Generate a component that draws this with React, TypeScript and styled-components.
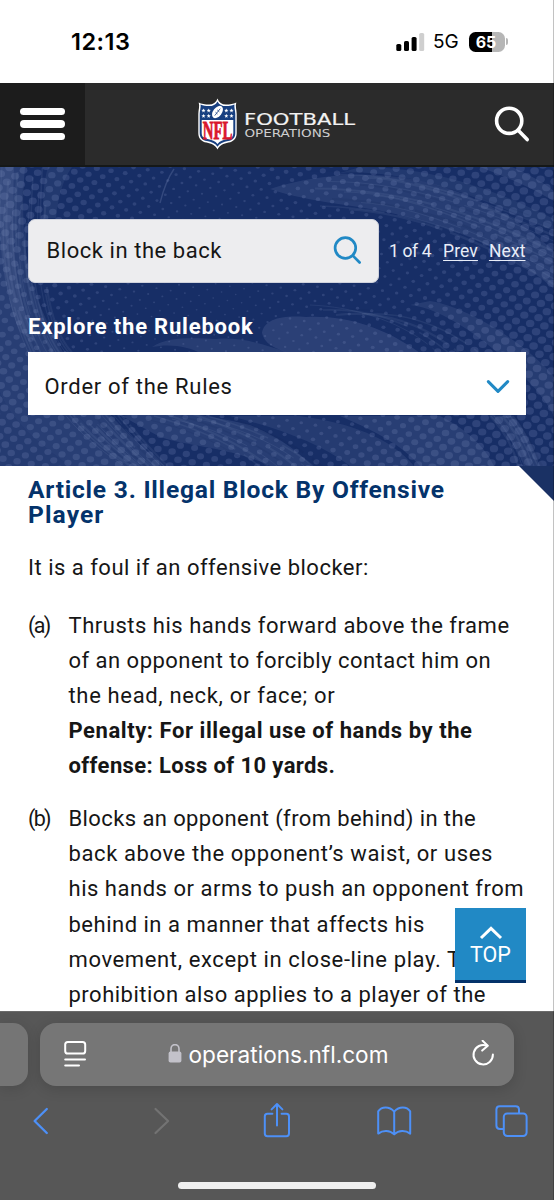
import React from 'react';
import styled, { createGlobalStyle } from 'styled-components';

const GlobalStyle = createGlobalStyle`
  *, *::before, *::after { box-sizing: border-box; }
  body { margin: 0; background: #fff; font-family: Roboto, "Liberation Sans", sans-serif; color: #161616; }
`;

const Screen = styled.div`
  position: relative;
  width: 554px;
  height: 1200px;
  display: flex;
  flex-direction: column;
  overflow: hidden;
  background: #fff;
  &::after {
    content: '';
    position: absolute;
    top: 0;
    right: 0;
    width: 1px;
    height: 100%;
    background: rgba(0, 0, 0, 0.24);
  }
`;

/* ---------- status bar ---------- */

const StatusBar = styled.div`
  flex: none;
  height: 83px;
  padding: 0 46px 0 71px;
  display: flex;
  align-items: center;
  font-family: Inter, "Liberation Sans", sans-serif;
  color: #000;
`;

const Clock = styled.div`
  margin-right: auto;
  font-size: 23.5px;
  font-weight: 600;
  letter-spacing: 0.5px;
`;

const Network = styled.div`
  margin: 0 9px 0 8px;
  font-size: 19px;
  font-weight: 400;
  width: 27px;
`;

const Battery = styled.div`
  width: 36px;
  height: 20px;
  border-radius: 6.5px;
  background: linear-gradient(90deg, #000 23px, #b6b6b6 23px);
  color: #fff;
  font-size: 16px;
  line-height: 20px;
  font-weight: 700;
  text-align: center;
  padding-right: 2px;
`;

const BatteryTip = styled.div`
  width: 2px;
  height: 7px;
  margin-left: 1px;
  border-radius: 0 2px 2px 0;
  background: #b6b6b6;
`;

/* ---------- site header ---------- */

const Header = styled.header`
  flex: none;
  height: 84px;
  display: flex;
  align-items: stretch;
  justify-content: space-between;
  background: #2b2b2b;
  border-bottom: 2px solid #151818;
`;

const MenuButton = styled.div`
  width: 84.5px;
  padding: 24.5px 0 0 20px;
  background: #1c1c1c;
  display: flex;
  flex-direction: column;
  gap: 5px;
`;

const MenuBar = styled.span`
  width: 45px;
  height: 7.5px;
  border-radius: 4px;
  background: #fff;
`;

const Brand = styled.svg`
  width: 162px;
  height: 56px;
  margin: 13px 0 0 32px;
`;

const HeaderSearch = styled.svg`
  width: 40px;
  height: 40px;
  margin: 21px 21px 0 56px;
`;

/* ---------- hero ---------- */

const Hero = styled.section`
  position: relative;
  flex: none;
  height: 299px;
  padding: 51.5px 28px 0;
  background: #172e66;
  overflow: hidden;
`;

const HeroArt = styled.svg`
  position: absolute;
  inset: 0;
  width: 554px;
  height: 299px;
`;

const HeroBody = styled.div`
  position: relative;
  display: flex;
  flex-direction: column;
`;

const SearchRow = styled.div`
  display: flex;
  align-items: center;
`;

const SearchBox = styled.div`
  width: 351px;
  height: 64.5px;
  padding: 0 17px 1px 17.5px;
  display: flex;
  align-items: center;
  justify-content: space-between;
  border: 1px solid #cfd2dc;
  border-radius: 7px;
  background: #ededef;
`;

const FieldText = styled.span<{ $ls: number }>`
  font-size: 22px;
  letter-spacing: ${p => p.$ls}px;
  white-space: nowrap;
`;

const Pager = styled.div`
  flex: 1;
  display: flex;
  justify-content: space-between;
  padding: 0 0.5px 0 10px;
  font-size: 17.5px;
  color: #e8edf8;
  white-space: nowrap;
`;

const PagerCount = styled.span`
  letter-spacing: -0.35px;
`;

const PagerLink = styled.span`
  letter-spacing: 0.1px;
  text-decoration: underline;
  text-underline-offset: 3px;
  text-decoration-thickness: 1.3px;
`;

const PagerLinks = styled.span`
  display: flex;
  gap: 11px;
`;

const HeroLabel = styled.div`
  margin: 29.5px 0 12px;
  font-size: 22px;
  line-height: 27px;
  font-weight: 700;
  letter-spacing: 0.8px;
  color: #fff;
`;

const Select = styled.div`
  height: 63.5px;
  padding: 6.5px 16.5px 0 16.5px;
  display: flex;
  align-items: center;
  justify-content: space-between;
  background: #fff;
`;

/* ---------- article ---------- */

const Article = styled.article`
  position: relative;
  flex: 1;
  min-height: 0;
  overflow: hidden;
  padding: 10.8px 28px 0;
`;

const Corner = styled.div`
  position: absolute;
  top: 0;
  right: 0;
  width: 35px;
  height: 35px;
  background: #1a3164;
  clip-path: polygon(0 0, 100% 0, 100% 100%);
`;

const Title = styled.h3`
  margin: 0 0 22.6px;
  font-size: 24.6px;
  line-height: 25.4px;
  font-weight: 700;
  color: #04336b;
`;

const TitleLine = styled.div<{ $ls: number }>`
  letter-spacing: ${p => p.$ls}px;
  white-space: nowrap;
`;

const Intro = styled.div`
  margin-bottom: 22.2px;
  line-height: 35.2px;
`;

const Item = styled.div`
  display: flex;
  margin-bottom: 17.3px;
  line-height: 35.2px;
`;

const Marker = styled.div`
  width: 40.5px;
  flex: none;
  font-size: 21.5px;
  letter-spacing: -1.7px;
`;

const Line = styled.div<{ $ls: number; $bold?: boolean }>`
  font-size: 22px;
  font-weight: ${p => (p.$bold ? 700 : 400)};
  letter-spacing: ${p => p.$ls}px;
  white-space: nowrap;
`;

const TopButton = styled.div`
  position: absolute;
  left: 455px;
  top: 442px;
  width: 71px;
  height: 75px;
  padding: 17px 0 0;
  display: flex;
  flex-direction: column;
  align-items: center;
  gap: 1.5px;
  background: #2189c5;
  border-bottom: 3px solid #04326a;
  color: #fff;
  font-size: 21.5px;
  line-height: 26px;
`;

/* ---------- browser chrome ---------- */

const Chrome = styled.footer`
  flex: none;
  height: 189px;
  display: flex;
  flex-direction: column;
  align-items: center;
  background: #575757;
  border-top: 1px solid #6b6b6b;
  overflow: hidden;
`;

const TabStrip = styled.div`
  align-self: stretch;
  display: flex;
  gap: 12px;
  padding-top: 10.5px;
`;

const SideTab = styled.div`
  width: 28px;
  height: 63.5px;
  border-radius: 0 15px 15px 0;
  background: #757575;
  box-shadow: 0 3px 14px rgba(0, 0, 0, 0.13);
`;

const AddressBar = styled.div`
  width: 474px;
  height: 63.5px;
  padding: 0 19px 0 23px;
  display: flex;
  align-items: center;
  justify-content: space-between;
  border-radius: 16px;
  background: #767676;
  box-shadow: 0 3px 14px rgba(0, 0, 0, 0.15);
`;

const Address = styled.div`
  display: flex;
  align-items: center;
  gap: 7px;
  margin-left: -2px;
  color: #fff;
  font: 400 22.6px Inter, "Liberation Sans", sans-serif;
`;

const Toolbar = styled.nav`
  align-self: stretch;
  display: flex;
  justify-content: space-between;
  padding: 13px 24px 0 22px;
`;

const HomeIndicator = styled.div`
  width: 198px;
  height: 7px;
  margin-top: auto;
  margin-bottom: 11px;
  border-radius: 4px;
  background: #efefef;
`;

/* ---------- hero artwork data ---------- */

type Dot = { x: number; y: number; r: number };

const dots: Dot[] = [];
for (let row = -14; row < 60; row++) {
  for (let col = -6; col < 48; col++) {
    const u = col * 14.4 + (row % 2 ? 7.2 : 0);
    const v = row * 7.2;
    const x = u * 0.985 - v * 0.17;
    const y = v * 0.985 + u * 0.17 - 30;
    if (x < -5 || x > 560 || y < -5 || y > 304) continue;
    const dist = Math.hypot(x - 240, (y - 130) * 1.3);
    const wave = Math.sin(x / 43 + y / 70) * 0.4 + Math.sin(y / 29 - x / 90) * 0.4;
    const r = Math.min(4.3, Math.max(0.7, dist / 72 + wave));
    dots.push({ x, y, r });
  }
}

const bands: [string, number][] = [
  ['M0 0H25C20 60 24 110 50 160C75 215 120 262 165 299H70C30 270 10 250 0 225Z', 0.15],
  ['M0 0H14C12 70 12 120 36 175L20 165C8 140 3 100 0 60Z', 0.14],
  ['M0 225C10 250 30 270 70 299H0Z', 0.12],
  ['M48 0H72C62 14 58 32 56 51H44C42 30 44 14 48 0Z', 0.1],
  ['M270 22C330 2 400 4 450 22C500 40 530 62 554 84V122C510 84 460 62 400 48C360 38 310 36 270 22Z', 0.14],
  ['M340 6C400 2 470 24 554 64V52C490 20 430 0 360 0Z', 0.1],
  ['M480 0H512C530 8 544 16 554 24V34C530 20 506 10 480 0Z', 0.14],
  ['M262 166C264 152 282 148 306 150C346 148 384 160 420 186H290C274 182 264 176 262 166Z', 0.17],
  ['M152 180C170 168 200 172 216 172C240 170 260 176 290 186H200C190 180 170 176 152 180Z', 0.14],
  ['M410 138C450 142 500 186 524 210C540 226 550 240 554 250V210C530 180 470 140 430 134Z', 0.13],
  ['M122 249C170 240 210 249 250 258C280 270 300 286 312 299H270C230 280 190 280 160 270Z', 0.15],
  ['M230 249H300C350 256 390 270 414 299H350C320 276 280 262 230 249Z', 0.12],
  ['M340 249H440C470 264 486 282 494 299H420C400 276 370 262 340 249Z', 0.15],
  ['M490 249H514C526 264 534 282 540 299H524C516 280 506 264 490 249Z', 0.14],
];

const streaks: string[] = [];
for (let i = 0; i < 15; i++) {
  const x = 2 + i * 3.1;
  streaks.push(`M${x} ${(i * 37) % 60}C${x - 6} ${80 + i} ${x + 2} ${130 + i * 2} ${x + 26} 185S${x + 78} ${270 - i} ${x + 122} 299`);
}
for (let i = 0; i < 12; i++) {
  streaks.push(`M${310 + ((i * 29) % 70)} ${4 + i * 3.5}C${400 + i} ${2 + i * 4} ${480} ${28 + i * 4} 554 ${58 + i * 5.4}`);
}
for (let i = 0; i < 9; i++) {
  streaks.push(`M${145 + i * 9} ${252 - (i % 3) * 3}C${190 + i * 9} ${262} ${225 + i * 9} 278 ${250 + i * 9} 299`);
}
for (let i = 0; i < 5; i++) {
  streaks.push(`M${310 + i * 13} ${138 + ((i * 5) % 11)}C${360 + i * 13} ${140 + i} ${410 + i * 11} ${158 + i} ${440 + i * 14} ${188 + i * 3}`);
}
for (let i = 0; i < 7; i++) {
  streaks.push(`M${490 + i * 4} 249C${504 + i * 4} 264 ${514 + i * 3} 282 ${518 + i * 4} 299`);
}

const HeroBackdrop = () => (
  <HeroArt viewBox="0 0 554 299">
    {bands.map(([d, o], i) => <path key={i} d={d} fill="#8d9bc8" opacity={o} />)}
    <g fill="#8090c0" opacity="0.22">
      {dots.map((p, i) => <ellipse key={i} cx={p.x} cy={p.y} rx={p.r} ry={p.r * 0.86} />)}
    </g>
    {streaks.map((d, i) => (
      <path
        key={i}
        d={d}
        fill="none"
        stroke={i % 4 === 3 ? '#0f2455' : '#93a0cb'}
        strokeWidth={1 + (i % 3) * 0.6}
        strokeDasharray={`${60 + ((i * 31) % 70)} ${6 + ((i * 7) % 12)}`}
        opacity={0.11}
      />
    ))}
    <path d="M174 2C167 12 163 24 160 36" fill="none" stroke="#8d9bc8" strokeWidth="1.4" opacity="0.25" />
  </HeroArt>
);

/* ---------- drawings ---------- */

const starPoints = (cx: number, cy: number, r: number) =>
  Array.from({ length: 10 }, (_, i) => {
    const a = -Math.PI / 2 + (i * Math.PI) / 5;
    const k = i % 2 ? r * 0.42 : r;
    return `${cx + k * Math.cos(a)},${cy + k * Math.sin(a)}`;
  }).join(' ');

const stars = [[6, 12.6], [11.2, 12.6], [6, 18], [11.2, 18], [28.8, 12.6], [34, 12.6], [28.8, 18], [34, 18]];

const Logo = () => (
  <Brand viewBox="196 96 162 56">
    <g transform="translate(197.5 98)">
      <path d="M20 .6C18.6 4.6 15.6 6.6 11.6 6.6C7.6 6.6 4 5.8 1.2 4.4C2.4 8 .8 12 .8 16V35C.8 40.6 4 43.6 9 44.6C14 45.6 18 47.4 20 51.6C22 47.4 26 45.6 31 44.6C36 43.6 39.2 40.6 39.2 35V16C39.2 12 37.6 8 38.8 4.4C36 5.8 32.4 6.6 28.4 6.6C24.4 6.6 21.4 4.6 20 .6Z" fill="#fff" />
      <path d="M20 3.4C18.2 6.8 15.4 8.1 11.6 8.1C8.4 8.1 5.6 7.6 3.1 6.6C3.5 9.8 2.2 12.6 2.2 16V35C2.2 39.8 5 42.2 9.4 43.1C14 44 18 45.6 20 48.8C22 45.6 26 44 30.6 43.1C35 42.2 37.8 39.8 37.8 35V16C37.8 12.6 36.5 9.8 36.9 6.6C34.4 7.6 31.6 8.1 28.4 8.1C24.6 8.1 21.8 6.8 20 3.4Z" fill="#173f80" />
      <path d="M4.2 22H35.8V35C35.8 38.8 33.6 40.4 30 41.1C25.6 42 22.2 43.3 20 45.9C17.8 43.3 14.4 42 10 41.1C6.4 40.4 4.2 38.8 4.2 35Z" fill="#fff" />
      {stars.map(([x, y], i) => <polygon key={i} points={starPoints(x, y, 2.2)} fill="#fff" />)}
      <ellipse cx="20" cy="14" rx="4.3" ry="7" transform="rotate(38 20 14)" fill="#fff" />
      <path d="M17.2 17.6L22.8 10.6M18 14.2L20 16M19.8 12L21.8 13.8" fill="none" stroke="#173f80" strokeWidth=".8" />
      <text x="5.2" y="40.6" textLength="29.6" lengthAdjust="spacingAndGlyphs" fontFamily="Liberation Serif, serif" fontWeight="700" fontSize="26" fill="#d9182d" stroke="#d9182d" strokeWidth=".9">NFL</text>
    </g>
    <text x="244" y="124.5" textLength="111" lengthAdjust="spacingAndGlyphs" fontFamily="DejaVu Sans, sans-serif" fontSize="16.6" fill="#f2f2f2" stroke="#f2f2f2" strokeWidth=".2">FOOTBALL</text>
    <text x="244.4" y="136.5" textLength="86" lengthAdjust="spacingAndGlyphs" fontFamily="DejaVu Sans, sans-serif" fontSize="10.8" fill="#cfcfcf">OPERATIONS</text>
  </Brand>
);

const BLUE = '#4d90f7';

export default function App() {
  return (
    <Screen>
      <GlobalStyle />
      <StatusBar>
        <Clock>12:13</Clock>
        <svg width="29" height="18" viewBox="0 0 29 18">
          <rect x="0.3" y="11" width="5" height="7" rx="1.6" />
          <rect x="8" y="8" width="5" height="10" rx="1.6" />
          <rect x="15.6" y="4" width="5" height="14" rx="1.6" />
          <rect x="23.2" y="0" width="5" height="18" rx="1.6" fill="#cfcfcf" />
        </svg>
        <Network>5G</Network>
        <Battery>65</Battery>
        <BatteryTip />
      </StatusBar>

      <Header>
        <MenuButton><MenuBar /><MenuBar /><MenuBar /></MenuButton>
        <Logo />
        <HeaderSearch viewBox="0 0 40 40" fill="none" stroke="#fff" strokeWidth="3.6" strokeLinecap="round">
          <circle cx="16.2" cy="16.8" r="12.6" />
          <path d="M25.4 26.4L34.2 35.6" />
        </HeaderSearch>
      </Header>

      <Hero>
        <HeroBackdrop />
        <HeroBody>
          <SearchRow>
            <SearchBox>
              <FieldText $ls={0.55}>Block in the back</FieldText>
              <svg width="28" height="28" viewBox="0 0 28 28" fill="none" stroke="#2189c5" strokeWidth="2.7" strokeLinecap="round">
                <circle cx="12.4" cy="12" r="10.3" />
                <path d="M19.8 19.6L26.6 26.5" />
              </svg>
            </SearchBox>
            <Pager>
              <PagerCount>1 of 4</PagerCount>
              <PagerLinks><PagerLink>Prev</PagerLink><PagerLink>Next</PagerLink></PagerLinks>
            </Pager>
          </SearchRow>
          <HeroLabel>Explore the Rulebook</HeroLabel>
          <Select>
            <FieldText $ls={0.7}>Order of the Rules</FieldText>
            <svg width="24" height="16" viewBox="0 0 24 16" fill="none" stroke="#2189c5" strokeWidth="3" strokeLinecap="round" strokeLinejoin="round">
              <path d="M2.3 2.6L12 12.4L21.7 2.6" />
            </svg>
          </Select>
        </HeroBody>
      </Hero>

      <Article>
        <Corner />
        <Title>
          <TitleLine $ls={0.76}>Article 3. Illegal Block By Offensive</TitleLine>
          <TitleLine $ls={1.1}>Player</TitleLine>
        </Title>
        <Intro><Line $ls={0.5}>It is a foul if an offensive blocker:</Line></Intro>
        <Item>
          <Marker>(a)</Marker>
          <div>
            <Line $ls={0.52}>Thrusts his hands forward above the frame</Line>
            <Line $ls={0.48}>of an opponent to forcibly contact him on</Line>
            <Line $ls={0.66}>the head, neck, or face; or</Line>
            <Line $bold $ls={0.56}>Penalty: For illegal use of hands by the</Line>
            <Line $bold $ls={0.4}>offense: Loss of 10 yards.</Line>
          </div>
        </Item>
        <Item>
          <Marker>(b)</Marker>
          <div>
            <Line $ls={0.4}>Blocks an opponent (from behind) in the</Line>
            <Line $ls={0.6}>back above the opponent’s waist, or uses</Line>
            <Line $ls={0.52}>his hands or arms to push an opponent from</Line>
            <Line $ls={0.5}>behind in a manner that affects his</Line>
            <Line $ls={0.62}>movement, except in close-line play. This</Line>
            <Line $ls={0.5}>prohibition also applies to a player of the</Line>
          </div>
        </Item>
        <TopButton>
          <svg width="24" height="15" viewBox="0 0 24 15" fill="none" stroke="#fff" strokeWidth="3">
            <path d="M2 13L12 3.4L22 13" />
          </svg>
          TOP
        </TopButton>
      </Article>

      <Chrome>
        <TabStrip>
          <SideTab />
          <AddressBar>
            <svg width="24" height="28" viewBox="0 0 24 28" fill="none" stroke="#fff" strokeWidth="2" strokeLinecap="round">
              <rect x="2.2" y="2" width="20" height="11.5" rx="2.6" />
              <path d="M2.2 19.4H22M2.2 25.4H16" />
            </svg>
            <Address>
              <svg width="14" height="20" viewBox="0 0 14 20" fill="#c3c2ca">
                <rect x="0.6" y="7.6" width="12.8" height="11" rx="1.8" />
                <path d="M3 8.4V4.8A4 4.2 0 0 1 11 4.8V8.4" fill="none" stroke="#c3c2ca" strokeWidth="1.6" />
              </svg>
              operations.nfl.com
            </Address>
            <svg width="24" height="28" viewBox="0 0 24 28" fill="none" stroke="#fff" strokeWidth="2" strokeLinecap="round" strokeLinejoin="round">
              <path d="M21.9 14.6A9.7 9.7 0 1 1 16 5.8" />
              <path d="M11.6 0.8L16.8 5.8L11.2 10.6" />
            </svg>
          </AddressBar>
        </TabStrip>
        <Toolbar>
          <svg width="36" height="44" viewBox="22 1099 36 44" fill="none" stroke={BLUE} strokeWidth="2.3" strokeLinecap="round" strokeLinejoin="round">
            <path d="M46.8 1109L34.6 1121L46.8 1133" />
          </svg>
          <svg width="36" height="44" viewBox="139.5 1099 36 44" fill="none" stroke="#737373" strokeWidth="2.2" strokeLinecap="round" strokeLinejoin="round">
            <path d="M155 1109L167.6 1121L155 1133" />
          </svg>
          <svg width="36" height="44" viewBox="258 1099 36 44" fill="none" stroke={BLUE} strokeWidth="2" strokeLinecap="round" strokeLinejoin="round">
            <path d="M272.4 1113.8H267.4Q264.8 1113.8 264.8 1116.4V1133.6Q264.8 1136.2 267.4 1136.2H286.4Q289 1136.2 289 1133.6V1116.4Q289 1113.8 286.4 1113.8H281.6" />
            <path d="M277 1125.4V1104.2M271.6 1109.4L277 1104L282.4 1109.4" />
          </svg>
          <svg width="36" height="44" viewBox="376 1099 36 44" fill="none" stroke={BLUE} strokeWidth="2" strokeLinejoin="round">
            <path d="M394.2 1111.6C391.6 1108.8 388.8 1107.6 385.6 1107.6C382.4 1107.6 380 1108.8 378.2 1111.4V1133.6C383 1130 389.6 1130 394.2 1134.4C398.8 1130 405.4 1130 410.2 1133.6V1111.4C408.4 1108.8 406 1107.6 402.8 1107.6C399.6 1107.6 396.8 1108.8 394.2 1111.6ZV1134" />
          </svg>
          <svg width="36" height="44" viewBox="494 1099 36 44" fill="none" stroke={BLUE} strokeWidth="2">
            <rect x="503.8" y="1113.4" width="22.8" height="22.6" rx="3.4" />
            <path d="M503.6 1129H499.8Q496.4 1129 496.4 1125.6V1109.6Q496.4 1106.2 499.8 1106.2H515.6Q519 1106.2 519 1109.6V1113.2" />
          </svg>
        </Toolbar>
        <HomeIndicator />
      </Chrome>
    </Screen>
  );
}
